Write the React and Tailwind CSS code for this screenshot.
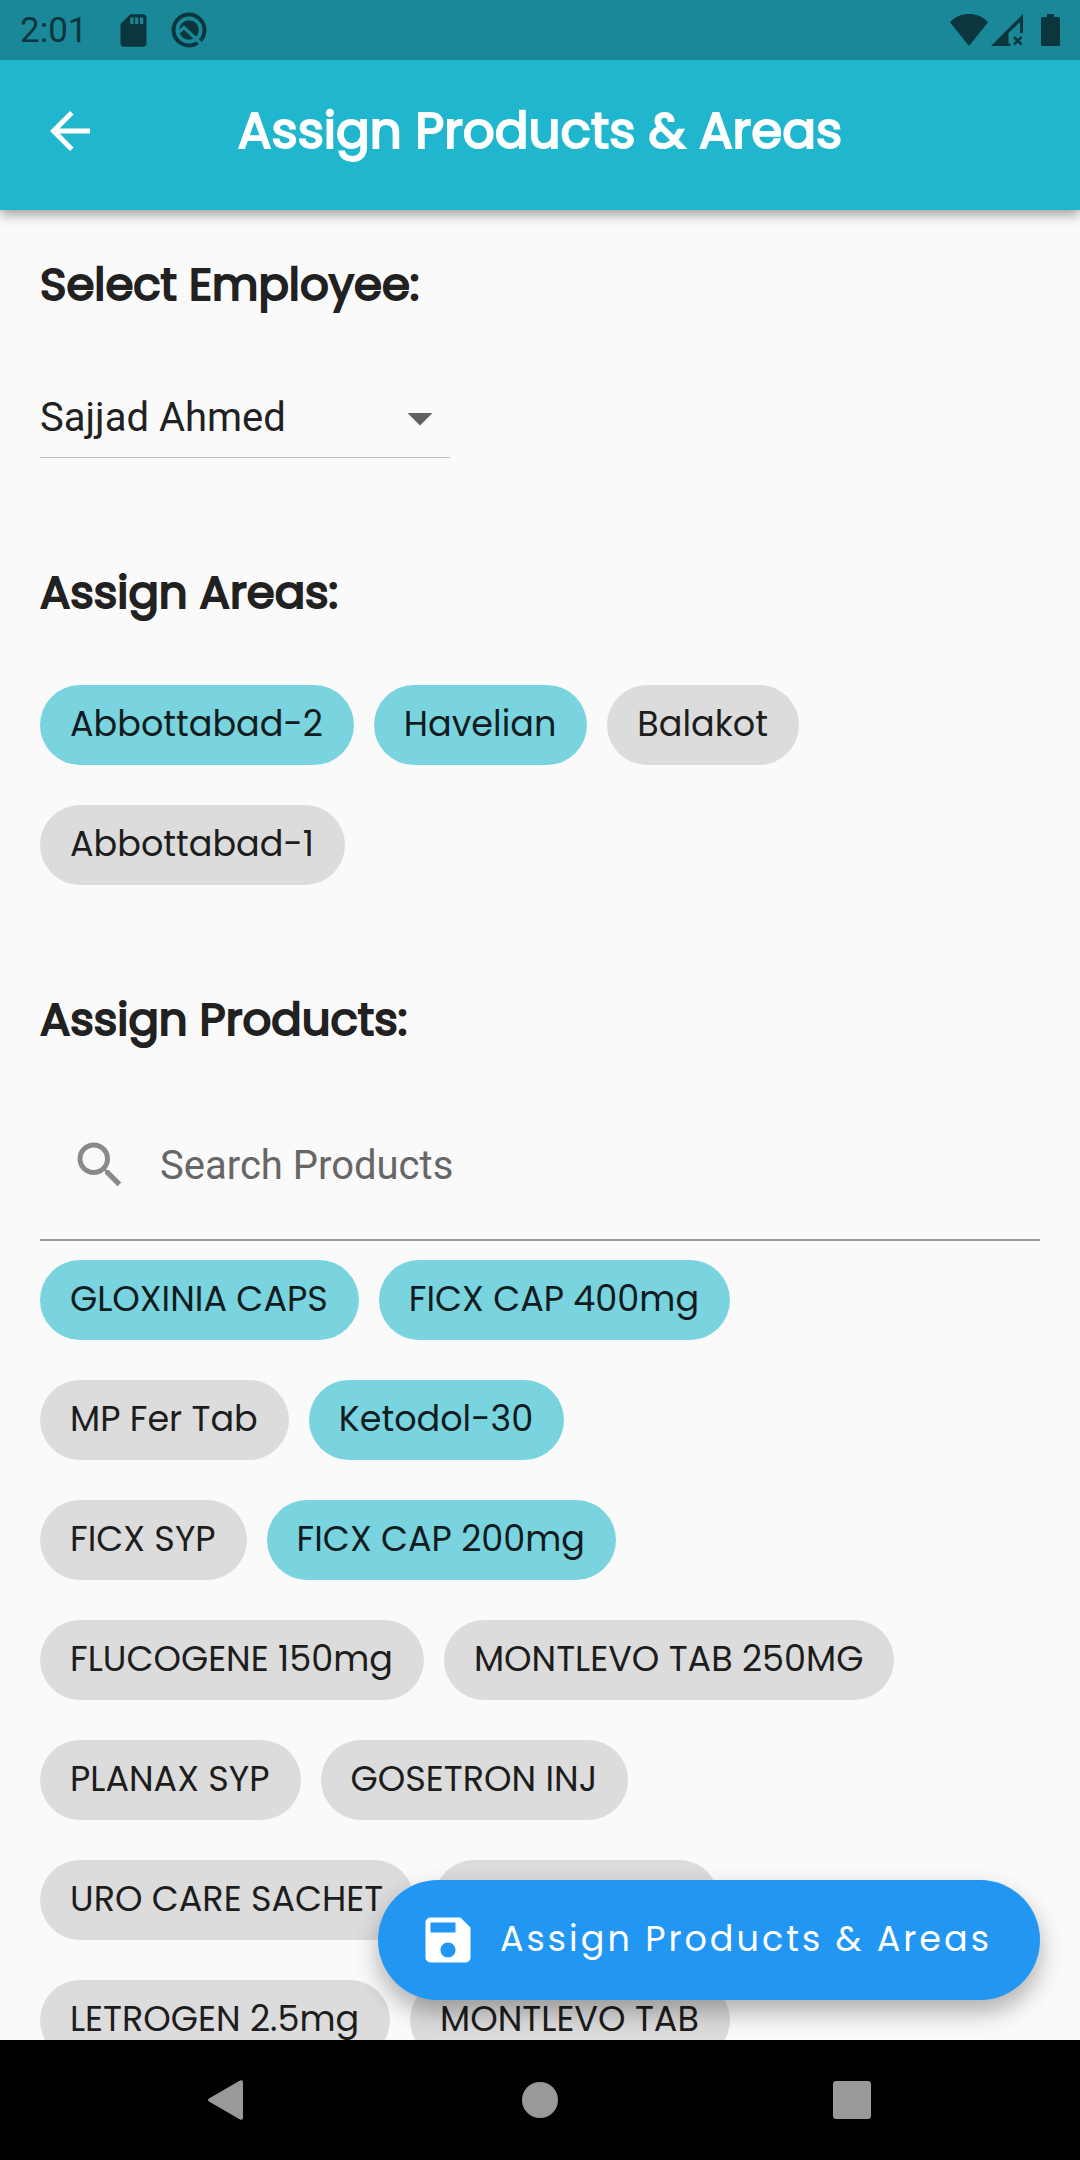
import React, { useState } from "react";
import { MdArrowBack, MdSave, MdSearch, MdSdCard, MdArrowDropDown } from "react-icons/md";

const AREAS = [
  [
    ["Abbottabad-2", true],
    ["Havelian", true],
    ["Balakot", false],
  ],
  [["Abbottabad-1", false]],
];

const PRODUCTS = [
  [
    ["GLOXINIA CAPS", true],
    ["FICX CAP 400mg", true],
  ],
  [
    ["MP Fer Tab", false],
    ["Ketodol-30", true],
  ],
  [
    ["FICX SYP", false],
    ["FICX CAP 200mg", true],
  ],
  [
    ["FLUCOGENE 150mg", false],
    ["MONTLEVO TAB 250MG", false],
  ],
  [
    ["PLANAX SYP", false],
    ["GOSETRON INJ", false],
  ],
  [
    ["URO CARE SACHET", false],
    ["", false],
  ],
  [
    ["LETROGEN 2.5mg", false],
    ["MONTLEVO TAB", false],
  ],
];

function StatusBar() {
  return (
    <div className="relative z-20 flex h-[60px] shrink-0 items-center bg-[#1a8899] px-5 font-['Roboto',sans-serif] text-[35px] leading-none text-[#0b363d]">
      <span>2:01</span>
      <MdSdCard className="ml-[26px] size-[39px]" />
      <svg viewBox="0 0 36 38" className="ml-[18px] h-[38px] w-9" fill="none" stroke="currentColor">
        <circle cx="18" cy="19" r="15.500" strokeWidth="4" />
        <circle cx="18" cy="19" r="9.800" fill="currentColor" stroke="none" />
        <path d="M7.500 21.500L13 16.500L34 36.500" stroke="#1a8899" strokeWidth="3.200" />
      </svg>
      <div className="ml-auto flex items-center">
        <svg viewBox="0 0 38 34" className="h-[34px] w-[38px]" fill="currentColor">
          <path d="M0 9.300C5 3.500 12 1 19 1s14 2.500 19 8.300L19 33z" />
        </svg>
        <svg viewBox="0 0 33 34" className="ml-[3px] h-[34px] w-[33px]" fill="currentColor">
          <path fillRule="evenodd" d="M0 33L32 1v19h-3V9L17.500 20v10.500h2V33z" />
          <path d="M23 24l7.500 7.500M30.500 24L23 31.500" stroke="currentColor" strokeWidth="2.600" />
        </svg>
        <svg viewBox="0 0 19 34" className="ml-[17px] h-[34px] w-[19px]" fill="currentColor">
          <path d="M6 1h7v3h4.500q1.500 0 1.500 1.500v26q0 1.500-1.500 1.500h-16Q0 33 0 31.500v-26Q0 4 1.500 4H6z" />
        </svg>
      </div>
    </div>
  );
}

function Heading({ children, id }) {
  return (
    <h2 id={id} className="text-[45px] font-normal leading-[72px] text-[#212121] [-webkit-text-stroke:2px]">
      {children}
    </h2>
  );
}

function Chip({ name, initial }) {
  const [on, setOn] = useState(initial);
  return (
    <button
      type="button"
      aria-pressed={on}
      aria-label={name || "Product"}
      onClick={() => setOn(!on)}
      className={
        "h-20 whitespace-nowrap rounded-full pb-0.5 pl-[30px] pr-[31px] text-[35px] leading-[78px] empty:w-[285px] " +
        (on ? "bg-[#7ad4df] text-[#101c1e]" : "bg-[#dcdcdc] text-[#1d1d1d]")
      }
    >
      {name || null}
    </button>
  );
}

function Chips({ rows, labelledBy }) {
  return (
    <div role="group" aria-labelledby={labelledBy} className="flex flex-col gap-10">
      {rows.map((row) => (
        <div key={row[0][0]} className="flex flex-wrap gap-5">
          {row.map(([name, initial]) => (
            <Chip key={name} name={name} initial={initial} />
          ))}
        </div>
      ))}
    </div>
  );
}

export default function App() {
  return (
    <div className="flex h-screen flex-col overflow-hidden bg-[#fafafa] font-['Poppins','Inter',sans-serif]">
      <StatusBar />
      <header className="relative z-10 grid h-[150px] shrink-0 grid-cols-[140px_1fr_140px] items-center bg-[#20b7ce] pb-2 text-white shadow-[0_4px_12px_rgba(0,0,0,0.4)]">
        <button type="button" aria-label="Back" className="ml-10 flex size-[60px] items-center justify-center">
          <MdArrowBack className="size-[60px]" />
        </button>
        <h1 className="whitespace-nowrap text-center text-[50px] font-normal leading-[72px] [-webkit-text-stroke:2px]">
          Assign Products &amp; Areas
        </h1>
      </header>

      <main className="relative min-h-0 flex-1 overflow-hidden">
        <div className="flex h-full flex-col overflow-hidden px-10 pt-[39px]">
          <Heading id="employee">Select Employee:</Heading>
          <div className="relative mt-[59px] w-[410px] shrink-0 border-b border-[#bdbdbd]">
            <select
              aria-labelledby="employee"
              className="block h-[77px] w-full appearance-none bg-transparent pb-0.5 font-['Roboto',sans-serif] text-[40px] text-[#212121]"
            >
              <option>Sajjad Ahmed</option>
            </select>
            <MdArrowDropDown className="pointer-events-none absolute right-0 top-2 size-[60px] text-[#616161]" />
          </div>

          <div className="mb-14 mt-[99px]">
            <Heading id="areas">Assign Areas:</Heading>
          </div>
          <Chips rows={AREAS} labelledBy="areas" />

          <div className="mt-[99px]">
            <Heading id="products">Assign Products:</Heading>
          </div>
          <label className="mb-[19px] mt-[35px] flex h-[150px] shrink-0 items-center border-b-2 border-[#999999] pl-[30px] text-[#8a8a8a]">
            <MdSearch className="size-[60px]" />
            <input
              type="text"
              aria-label="Search Products"
              placeholder="Search Products"
              className="ml-[30px] h-20 min-w-0 flex-1 bg-transparent font-['Roboto',sans-serif] text-[40px] text-[#212121] outline-none placeholder:text-[#666666]"
            />
          </label>
          <Chips rows={PRODUCTS} labelledBy="products" />
        </div>

        <button
          type="button"
          className="absolute bottom-10 right-10 flex h-[120px] items-center rounded-full bg-[#2196f3] pl-10 pr-12 text-[35px] tracking-[3px] text-white shadow-[0_12px_24px_rgba(0,0,0,0.3)]"
        >
          <MdSave className="mr-[22px] size-[60px]" />
          <span className="pb-0.5">Assign Products &amp; Areas</span>
        </button>
      </main>

      <nav className="flex h-[120px] shrink-0 items-center justify-center gap-[274px] bg-black text-[#999999]">
        <button type="button" aria-label="Back">
          <svg viewBox="0 0 38 40" className="h-10 w-[38px] overflow-visible" fill="currentColor">
            <path d="M31 0.500Q34 -0.500 34 2.500v35Q34 40.500 31 39.500L0 21.500Q-2 20 0 18.500z" />
          </svg>
        </button>
        <button type="button" aria-label="Home">
          <svg viewBox="0 0 38 38" className="size-[38px]" fill="currentColor">
            <circle cx="19" cy="19" r="18" />
          </svg>
        </button>
        <button type="button" aria-label="Recent apps">
          <svg viewBox="0 0 38 38" className="size-[38px]" fill="currentColor">
            <rect width="38" height="38" rx="3" />
          </svg>
        </button>
      </nav>
    </div>
  );
}
